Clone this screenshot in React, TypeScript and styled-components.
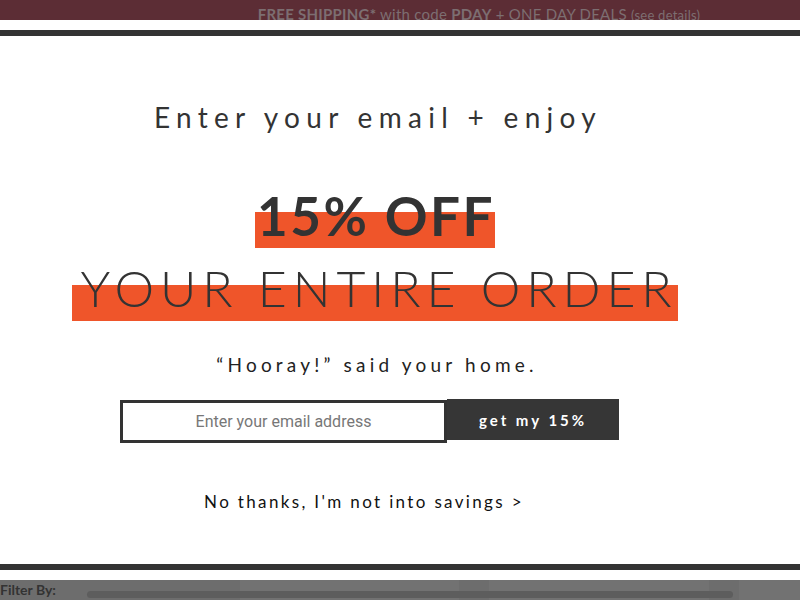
import React from "react";
import styled, { createGlobalStyle } from "styled-components";

const Global = createGlobalStyle`
  html, body { margin: 0; padding: 0; background: #ffffff; }
  body { font-family: "Lato", "Open Sans", sans-serif; }
  * { box-sizing: border-box; }
`;

const Page = styled.div`
  width: 800px;
  height: 600px;
  display: flex;
  flex-direction: column;
  overflow: hidden;
  background: #ffffff;
`;

const PromoBar = styled.div`
  height: 20px;
  flex: none;
  background: #5c2d35;
  overflow: hidden;
  display: flex;
  justify-content: center;
  padding: 7px 0 0 158px;
  font-family: "Lato", sans-serif;
  font-size: 15px;
  line-height: 1;
  letter-spacing: 0.25px;
  color: #7c6e71;
  white-space: nowrap;
`;

const PromoStrong = styled.b`
  font-weight: 700;
`;

const PromoSmall = styled.span`
  font-size: 13px;
`;

const Gap = styled.div`
  height: 10px;
  flex: none;
`;

const Modal = styled.div`
  flex: none;
  height: 540px;
  border-top: 6px solid #333333;
  border-bottom: 6px solid #333333;
  display: flex;
  flex-direction: column;
  align-items: center;
  padding-right: 50px;
  color: #333333;
`;

const Heading = styled.h1`
  margin: 67px 0 0 0;
  font-family: "Lato", sans-serif;
  font-weight: 400;
  font-size: 28px;
  line-height: 1;
  letter-spacing: 6.3px;
  padding-left: 6px;
  color: #333333;
`;

const Highlight = styled.div<{ $cut: number; $size: number; $weight: number; $spacing: number; $padL: number; $padR: number; $padB: number; $mt: number }>`
  margin-top: ${(p) => p.$mt}px;
  font-family: "Lato", sans-serif;
  font-size: ${(p) => p.$size}px;
  font-weight: ${(p) => p.$weight};
  line-height: 1;
  letter-spacing: ${(p) => p.$spacing}px;
  padding: 0 ${(p) => p.$padR}px ${(p) => p.$padB}px ${(p) => p.$padL}px;
  background: linear-gradient(to bottom, transparent ${(p) => p.$cut}px, #ef552a ${(p) => p.$cut}px);
  color: #333333;
  white-space: nowrap;
`;

const Tagline = styled.p`
  margin: 34px 0 0 0;
  font-family: "Lato", sans-serif;
  font-size: 19px;
  font-weight: 400;
  line-height: 1;
  letter-spacing: 4.2px;
  padding-left: 4px;
  color: #222222;
`;

const Form = styled.form`
  margin: 25px 11px 0 0;
  display: flex;
  align-items: flex-start;
`;

const EmailInput = styled.input`
  width: 327px;
  height: 43px;
  margin-top: 1px;
  border: 3px solid #333333;
  background: #ffffff;
  font-family: "Roboto", "Liberation Sans", sans-serif;
  font-size: 16px;
  text-align: center;
  color: #333333;
  outline: none;
  padding: 0;
  &::placeholder { color: #777777; }
`;

const SubmitButton = styled.button`
  width: 172px;
  height: 41px;
  border: none;
  background: #363636;
  color: #ffffff;
  font-family: "Lato", sans-serif;
  font-weight: 700;
  font-size: 15px;
  letter-spacing: 3px;
  padding: 0;
  cursor: pointer;
`;

const NoThanks = styled.a`
  margin: 50px 22px 0 0;
  font-family: "Lato", sans-serif;
  font-size: 17px;
  line-height: 1;
  letter-spacing: 2.35px;
  color: #111111;
  text-decoration: none;
`;

const FilterBar = styled.div`
  height: 20px;
  flex: none;
  background: linear-gradient(
    to right,
    #6d6d6d 0 240px,
    #727272 240px 459px,
    #6d6d6d 459px 489px,
    #727272 489px 709px,
    #6d6d6d 709px 739px,
    #727272 739px 800px
  );
  display: flex;
  align-items: flex-start;
  overflow: hidden;
`;

const FilterLabel = styled.span`
  width: 87px;
  flex: none;
  padding-top: 3px;
  font-family: "Lato", sans-serif;
  font-weight: 700;
  font-size: 14px;
  line-height: 1;
  color: #333333;
`;

const Track = styled.div`
  width: 646px;
  height: 7px;
  margin-top: 11px;
  border-radius: 4px;
  background: #5d5d5d;
`;

export default function App() {
  return (
    <>
      <Global />
      <Page>
        <PromoBar>
          <span>
            <PromoStrong>FREE SHIPPING*</PromoStrong> with code <PromoStrong>PDAY</PromoStrong> + ONE DAY DEALS <PromoSmall>(see details)</PromoSmall>
          </span>
        </PromoBar>
        <Gap />
        <Modal>
          <Heading>Enter your email + enjoy</Heading>
          <Highlight $mt={58} $size={53} $weight={700} $spacing={2.5} $cut={23} $padL={2} $padR={0} $padB={6}>
            15% OFF
          </Highlight>
          <Highlight $mt={15} $size={50} $weight={300} $spacing={5.9} $cut={22} $padL={8} $padR={0} $padB={8}>
            YOUR ENTIRE ORDER
          </Highlight>
          <Tagline>“Hooray!” said your home.</Tagline>
          <Form onSubmit={(e) => e.preventDefault()}>
            <EmailInput type="email" placeholder="Enter your email address" />
            <SubmitButton type="submit">get my 15%</SubmitButton>
          </Form>
          <NoThanks href="#">No thanks, I'm not into savings &gt;</NoThanks>
        </Modal>
        <Gap />
        <FilterBar>
          <FilterLabel>Filter By:</FilterLabel>
          <Track />
        </FilterBar>
      </Page>
    </>
  );
}
